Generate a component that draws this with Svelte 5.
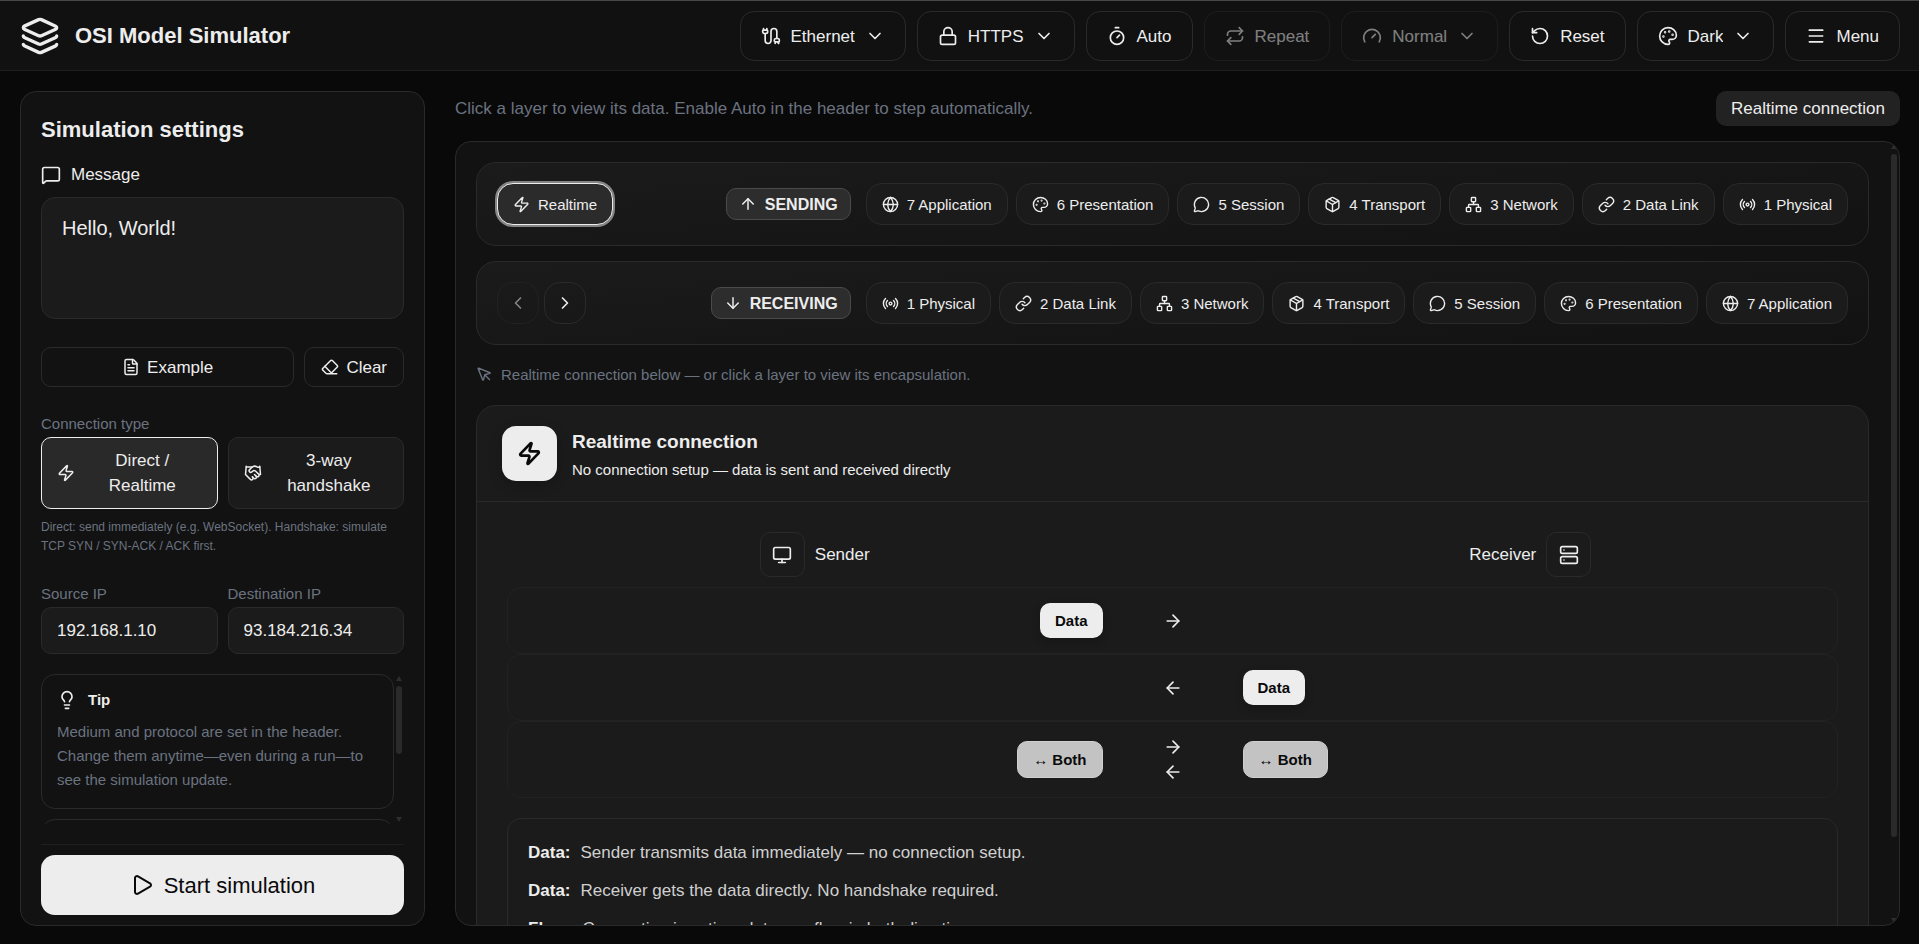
<script>
  const icons = {
    layers: '<path d="M12.83 2.18a2 2 0 0 0-1.66 0L2.6 6.08a1 1 0 0 0 0 1.83l8.58 3.91a2 2 0 0 0 1.66 0l8.58-3.9a1 1 0 0 0 0-1.83z"/><path d="M2 12a1 1 0 0 0 .58.91l8.6 3.91a2 2 0 0 0 1.65 0l8.58-3.9A1 1 0 0 0 22 12"/><path d="M2 17a1 1 0 0 0 .58.91l8.6 3.91a2 2 0 0 0 1.65 0l8.58-3.9A1 1 0 0 0 22 17"/>',
    cable: '<path d="M17 21v-2a1 1 0 0 1-1-1v-1a2 2 0 0 1 2-2h2a2 2 0 0 1 2 2v1a1 1 0 0 1-1 1v2"/><path d="M19 15V6.5a1 1 0 0 0-7 0v11a1 1 0 0 1-7 0V9"/><path d="M21 21v-2h-4"/><path d="M3 5h4V3"/><path d="M7 5a1 1 0 0 1 1 1v1a2 2 0 0 1-2 2H4a2 2 0 0 1-2-2V6a1 1 0 0 1 1-1V3"/>',
    lock: '<rect width="18" height="11" x="3" y="11" rx="2"/><path d="M7 11V7a5 5 0 0 1 10 0v4"/>',
    timer: '<path d="M10 2h4"/><path d="m12 14 3-3"/><circle cx="12" cy="14" r="8"/>',
    repeat: '<path d="m17 2 4 4-4 4"/><path d="M3 11v-1a4 4 0 0 1 4-4h14"/><path d="m7 22-4-4 4-4"/><path d="M21 13v1a4 4 0 0 1-4 4H3"/>',
    gauge: '<path d="m12 14 4-4"/><path d="M3.34 19a10 10 0 1 1 17.32 0"/>',
    reset: '<path d="M3 12a9 9 0 1 0 9-9 9.75 9.75 0 0 0-6.74 2.74L3 8"/><path d="M3 3v5h5"/>',
    palette: '<path d="M12 22a1 1 0 0 1 0-20 10 9 0 0 1 10 9 5 5 0 0 1-5 5h-2.25a1.75 1.75 0 0 0-1.4 2.8l.3.4a1.75 1.75 0 0 1-1.4 2.8z"/><g fill="currentColor"><circle cx="13.5" cy="6.5" r=".5"/><circle cx="17.5" cy="10.5" r=".5"/><circle cx="6.5" cy="12.5" r=".5"/><circle cx="8.5" cy="7.5" r=".5"/></g>',
    menu: '<path d="M4 5h16"/><path d="M4 12h16"/><path d="M4 19h16"/>',
    message: '<path d="M22 17a2 2 0 0 1-2 2H6.828a2 2 0 0 0-1.414.586l-2.202 2.202A.71.71 0 0 1 2 21.286V5a2 2 0 0 1 2-2h16a2 2 0 0 1 2 2z"/>',
    file: '<path d="M6 22a2 2 0 0 1-2-2V4a2 2 0 0 1 2-2h8a2.4 2.4 0 0 1 1.704.706l3.588 3.588A2.4 2.4 0 0 1 20 8v12a2 2 0 0 1-2 2z"/><path d="M14 2v5a1 1 0 0 0 1 1h5"/><path d="M10 9H8"/><path d="M16 13H8"/><path d="M16 17H8"/>',
    eraser: '<path d="M21 21H8a2 2 0 0 1-1.42-.587l-3.994-3.999a2 2 0 0 1 0-2.828l10-10a2 2 0 0 1 2.829 0l5.999 6a2 2 0 0 1 0 2.828L12.834 21"/><path d="m5.082 11.09 8.828 8.828"/>',
    zap: '<path d="M4 14a1 1 0 0 1-.78-1.63l9.9-10.2a.5.5 0 0 1 .86.46l-1.92 6.02A1 1 0 0 0 13 10h7a1 1 0 0 1 .78 1.63l-9.9 10.2a.5.5 0 0 1-.86-.46l1.92-6.02A1 1 0 0 0 11 14z"/>',
    handshake: '<path d="m11 17 2 2a1 1 0 1 0 3-3"/><path d="m14 14 2.5 2.5a1 1 0 1 0 3-3l-3.88-3.88a3 3 0 0 0-4.24 0l-.88.88a1 1 0 1 1-3-3l2.81-2.81a5.79 5.79 0 0 1 7.06-.87l.47.28a2 2 0 0 0 1.42.25L21 4"/><path d="m21 3 1 11h-2"/><path d="M3 3 2 14l6.5 6.5a1 1 0 1 0 3-3"/><path d="M3 4h8"/>',
    bulb: '<path d="M15 14c.2-1 .7-1.7 1.5-2.5 1-.9 1.5-2.2 1.5-3.5A6 6 0 0 0 6 8c0 1 .2 2.2 1.5 3.5.7.7 1.3 1.5 1.5 2.5"/><path d="M9 18h6"/><path d="M10 22h4"/>',
    play: '<path d="M5 5a2 2 0 0 1 3.008-1.728l11.997 6.998a2 2 0 0 1 .003 3.458l-12 7A2 2 0 0 1 5 19z"/>',
    chevronDown: '<path d="m6 9 6 6 6-6"/>',
    chevronLeft: '<path d="m15 18-6-6 6-6"/>',
    chevronRight: '<path d="m9 18 6-6-6-6"/>',
    arrowUp: '<path d="m5 12 7-7 7 7"/><path d="M12 19V5"/>',
    arrowDown: '<path d="M12 5v14"/><path d="m19 12-7 7-7-7"/>',
    arrowRight: '<path d="M5 12h14"/><path d="m12 5 7 7-7 7"/>',
    arrowLeft: '<path d="m12 19-7-7 7-7"/><path d="M19 12H5"/>',
    globe: '<circle cx="12" cy="12" r="10"/><path d="M12 2a14.5 14.5 0 0 0 0 20 14.5 14.5 0 0 0 0-20"/><path d="M2 12h20"/>',
    chat: '<path d="M2.992 16.342a2 2 0 0 1 .094 1.167l-1.065 3.29a1 1 0 0 0 1.236 1.168l3.413-.998a2 2 0 0 1 1.099.092 10 10 0 1 0-4.777-4.719"/>',
    box: '<path d="M11 21.73a2 2 0 0 0 2 0l7-4A2 2 0 0 0 21 16V8a2 2 0 0 0-1-1.73l-7-4a2 2 0 0 0-2 0l-7 4A2 2 0 0 0 3 8v8a2 2 0 0 0 1 1.73z"/><path d="M12 22V12"/><path d="M3.29 7 12 12l8.71-5"/><path d="m7.5 4.27 9 5.15"/>',
    network: '<rect x="16" y="16" width="6" height="6" rx="1"/><rect x="2" y="16" width="6" height="6" rx="1"/><rect x="9" y="2" width="6" height="6" rx="1"/><path d="M5 16v-3a1 1 0 0 1 1-1h12a1 1 0 0 1 1 1v3"/><path d="M12 12V8"/>',
    link: '<path d="M10 13a5 5 0 0 0 7.54.54l3-3a5 5 0 0 0-7.07-7.07l-1.72 1.71"/><path d="M14 11a5 5 0 0 0-7.54-.54l-3 3a5 5 0 0 0 7.07 7.07l1.71-1.71"/>',
    radio: '<path d="M16.247 7.761a6 6 0 0 1 0 8.478"/><path d="M19.075 4.933a10 10 0 0 1 0 14.134"/><path d="M4.925 19.067a10 10 0 0 1 0-14.134"/><path d="M7.753 16.239a6 6 0 0 1 0-8.478"/><circle cx="12" cy="12" r="2"/>',
    pointer: '<path d="M12.586 12.586 19 19"/><path d="M3.688 3.037a.497.497 0 0 0-.651.651l6.5 15.999a.501.501 0 0 0 .947-.062l1.569-6.083a2 2 0 0 1 1.448-1.479l6.124-1.579a.5.5 0 0 0 .063-.947z"/>',
    monitor: '<rect width="20" height="14" x="2" y="3" rx="2"/><path d="M8 21h8"/><path d="M12 17v4"/>',
    server: '<rect width="20" height="8" x="2" y="2" rx="2"/><rect width="20" height="8" x="2" y="14" rx="2"/><path d="M6 6h.01"/><path d="M6 18h.01"/>',
  };

  const layers = [
    { n: 7, name: "Application", icon: "globe" },
    { n: 6, name: "Presentation", icon: "palette" },
    { n: 5, name: "Session", icon: "chat" },
    { n: 4, name: "Transport", icon: "box" },
    { n: 3, name: "Network", icon: "network" },
    { n: 2, name: "Data Link", icon: "link" },
    { n: 1, name: "Physical", icon: "radio" },
  ];
  const receiving = [...layers].reverse();

  const notes = [
    { label: "Data:", text: "Sender transmits data immediately — no connection setup." },
    { label: "Data:", text: "Receiver gets the data directly. No handshake required." },
    { label: "Flow:", text: "Connection is active; data can flow in both directions." },
  ];

  let medium = $state("Ethernet");
  let protocol = $state("HTTPS");
  let speed = $state("Normal");
  let theme = $state("Dark");
  let auto = $state(false);
  let message = $state("Hello, World!");
  let mode = $state("direct");
  let sourceIp = $state("192.168.1.10");
  let destIp = $state("93.184.216.34");
  let selected = $state("realtime");
</script>

{#snippet icon(name, size = 20)}
  <svg width={size} height={size} viewBox="0 0 24 24" fill="none" stroke="currentColor" stroke-width="2" stroke-linecap="round" stroke-linejoin="round" aria-hidden="true">
    {@html icons[name]}
  </svg>
{/snippet}

{#snippet layerButton(layer, side)}
  <button class="layer" class:active={selected === side + layer.n} onclick={() => (selected = side + layer.n)}>
    {@render icon(layer.icon, 17)}
    <span>{layer.n} {layer.name}</span>
  </button>
{/snippet}

{#snippet rail()}
  <div class="rail" aria-hidden="true">
    <i class="up"></i>
    <div class="track"><div class="thumb"></div></div>
    <i class="down"></i>
  </div>
{/snippet}

<div class="page">
  <header>
    <div class="brand">
      {@render icon("layers", 40)}
      <h1>OSI Model Simulator</h1>
    </div>
    <nav>
      <label class="control">
        {@render icon("cable")}
        <select aria-label="Medium" bind:value={medium}>
          <option>Ethernet</option>
          <option>Wi-Fi</option>
        </select>
        {@render icon("chevronDown")}
      </label>
      <label class="control">
        {@render icon("lock")}
        <select aria-label="Protocol" bind:value={protocol}>
          <option>HTTPS</option>
          <option>HTTP</option>
        </select>
        {@render icon("chevronDown")}
      </label>
      <button class="control" onclick={() => (auto = !auto)}>{@render icon("timer")}<span>Auto</span></button>
      <button class="control off" disabled={!auto}>{@render icon("repeat")}<span>Repeat</span></button>
      <label class="control off">
        {@render icon("gauge")}
        <select aria-label="Speed" bind:value={speed} disabled={!auto}>
          <option>Normal</option>
          <option>Fast</option>
        </select>
        {@render icon("chevronDown")}
      </label>
      <button class="control">{@render icon("reset")}<span>Reset</span></button>
      <label class="control">
        {@render icon("palette")}
        <select aria-label="Theme" bind:value={theme}>
          <option>Dark</option>
          <option>Light</option>
        </select>
        {@render icon("chevronDown")}
      </label>
      <button class="control">{@render icon("menu")}<span>Menu</span></button>
    </nav>
  </header>

  <div class="content">
    <aside>
      <h2>Simulation settings</h2>
      <label class="message-label" for="message">{@render icon("message")}<span>Message</span></label>
      <textarea id="message" bind:value={message}></textarea>

      <div class="actions">
        <button class="small grow" onclick={() => (message = "Hello, World!")}>{@render icon("file", 18)}<span>Example</span></button>
        <button class="small" onclick={() => (message = "")}>{@render icon("eraser", 18)}<span>Clear</span></button>
      </div>

      <div class="group">
        <div class="caption" id="conn-type">Connection type</div>
        <div class="pair" role="group" aria-labelledby="conn-type">
          <button class="mode" class:active={mode === "direct"} onclick={() => (mode = "direct")}>
            {@render icon("zap", 18)}<span>Direct / Realtime</span>
          </button>
          <button class="mode" class:active={mode === "handshake"} onclick={() => (mode = "handshake")}>
            {@render icon("handshake", 18)}<span>3-way handshake</span>
          </button>
        </div>
        <p class="hint">Direct: send immediately (e.g. WebSocket). Handshake: simulate TCP SYN / SYN-ACK / ACK first.</p>
      </div>

      <div class="pair addresses">
        <div>
          <label class="caption" for="src">Source IP</label>
          <input id="src" type="text" bind:value={sourceIp} />
        </div>
        <div>
          <label class="caption" for="dst">Destination IP</label>
          <input id="dst" type="text" bind:value={destIp} />
        </div>
      </div>

      <div class="tips">
        <div class="tips-scroll">
          <div class="tip">
            <h3>{@render icon("bulb")}<span>Tip</span></h3>
            <p>Medium and protocol are set in the header. Change them anytime—even during a run—to see the simulation update.</p>
          </div>
          <div class="tip next"></div>
        </div>
        {@render rail()}
      </div>

      <div class="start">
        <button>{@render icon("play", 24)}<span>Start simulation</span></button>
      </div>
    </aside>

    <main>
      <div class="intro">
        <p>Click a layer to view its data. Enable Auto in the header to step automatically.</p>
        <span class="chip">Realtime connection</span>
      </div>

      <div class="panel">
        <div class="panel-scroll">
          <div class="lane">
            <button class="layer" class:active={selected === "realtime"} onclick={() => (selected = "realtime")}>
              {@render icon("zap", 17)}<span>Realtime</span>
            </button>
            <div class="stack">
              <span class="direction">{@render icon("arrowUp", 18)}<b>SENDING</b></span>
              <div class="layers">
                {#each layers as layer}
                  {@render layerButton(layer, "s")}
                {/each}
              </div>
            </div>
          </div>

          <div class="lane">
            <div class="steps">
              <button class="layer step" disabled aria-label="Previous">{@render icon("chevronLeft")}</button>
              <button class="layer step" aria-label="Next">{@render icon("chevronRight")}</button>
            </div>
            <div class="stack">
              <span class="direction">{@render icon("arrowDown", 18)}<b>RECEIVING</b></span>
              <div class="layers">
                {#each receiving as layer}
                  {@render layerButton(layer, "r")}
                {/each}
              </div>
            </div>
          </div>

          <p class="note">{@render icon("pointer", 17)}<span>Realtime connection below — or click a layer to view its encapsulation.</span></p>

          <section class="card">
            <div class="card-head">
              <div class="tile">{@render icon("zap", 25)}</div>
              <div>
                <h2>Realtime connection</h2>
                <p>No connection setup — data is sent and received directly</p>
              </div>
            </div>

            <div class="card-body">
              <div class="hosts">
                <div class="host"><span class="host-icon">{@render icon("monitor")}</span>Sender</div>
                <span></span>
                <div class="host">Receiver<span class="host-icon">{@render icon("server")}</span></div>
              </div>

              <div class="flow">
                <div class="from"><b class="pill">Data</b></div>
                <div class="arrows">{@render icon("arrowRight")}</div>
                <div></div>
              </div>
              <div class="flow">
                <div></div>
                <div class="arrows">{@render icon("arrowLeft")}</div>
                <div class="to"><b class="pill">Data</b></div>
              </div>
              <div class="flow">
                <div class="from"><b class="pill both">↔ Both</b></div>
                <div class="arrows">{@render icon("arrowRight")}{@render icon("arrowLeft")}</div>
                <div class="to"><b class="pill both">↔ Both</b></div>
              </div>

              <div class="notes">
                {#each notes as item}
                  <p><b>{item.label}</b><span>{item.text}</span></p>
                {/each}
              </div>
            </div>
          </section>
        </div>
        {@render rail()}
      </div>
    </main>
  </div>
</div>

<style>
  :global(body) {
    background: #090909;
  }
  .page {
    --text: #ededed;
    --muted: #6b7280;
    --line: #2a2a2a;
    --raised: #1b1b1b;
    --panel: #121212;
    display: flex;
    flex-direction: column;
    height: 100vh;
    background: #090909;
    color: var(--text);
    font-family: "Liberation Sans", Arial, sans-serif;
    font-size: 17px;
    line-height: 25px;
  }
  .page * {
    box-sizing: border-box;
  }
  h1, h2, h3, p {
    margin: 0;
  }
  svg {
    display: block;
    flex: none;
  }
  button, select, input, textarea {
    font: inherit;
    color: inherit;
    margin: 0;
  }
  button {
    display: flex;
    align-items: center;
    justify-content: center;
    cursor: pointer;
    white-space: nowrap;
  }

  header {
    display: flex;
    align-items: center;
    justify-content: space-between;
    flex: none;
    padding: 10px 19px 9px 20px;
    background: #111;
    border-top: 1px solid #474747;
    border-bottom: 1px solid #1f1f1f;
  }
  .brand {
    display: flex;
    align-items: center;
    gap: 15px;
  }
  h1 {
    font-size: 22px;
    line-height: 30px;
  }
  nav {
    display: flex;
    gap: 11px;
  }
  .control {
    display: flex;
    align-items: center;
    gap: 10px;
    height: 50px;
    padding: 0 20px;
    background: transparent;
    border: 1px solid var(--line);
    border-radius: 14px;
  }
  .control.off {
    opacity: 0.5;
  }
  select {
    appearance: none;
    field-sizing: content;
    padding: 0;
    border: 0;
    background: transparent;
    opacity: 1;
  }
  option {
    background: var(--panel);
  }

  .content {
    display: grid;
    grid-template-columns: 405px minmax(0, 1fr);
    gap: 30px;
    flex: 1;
    min-height: 0;
    padding: 20px 19px 18px 20px;
  }

  aside {
    display: flex;
    flex-direction: column;
    min-height: 0;
    padding: 20px 20px 10px;
    background: var(--panel);
    border: 1px solid var(--line);
    border-radius: 16px;
  }
  aside h2 {
    font-size: 22px;
    line-height: 35px;
  }
  .message-label {
    display: flex;
    align-items: center;
    gap: 10px;
    margin: 15px 0 10px;
  }
  textarea {
    display: block;
    flex: none;
    width: 100%;
    height: 122px;
    padding: 15px 20px;
    font-size: 20px;
    line-height: 30px;
    background: var(--raised);
    border: 1px solid var(--line);
    border-radius: 14px;
    outline: none;
    resize: none;
  }
  .actions {
    display: flex;
    gap: 10px;
    margin-top: 28px;
  }
  .small {
    gap: 7px;
    height: 40px;
    padding: 0 16px;
    background: transparent;
    border: 1px solid var(--line);
    border-radius: 10px;
  }
  .grow {
    flex: 1;
  }
  .group {
    margin-top: 24px;
  }
  .caption {
    display: block;
    margin-bottom: 1px;
    font-size: 15px;
    color: var(--muted);
  }
  .pair {
    display: grid;
    grid-template-columns: 1fr 1fr;
    gap: 10px;
  }
  .mode {
    gap: 8px;
    padding: 10px 15px;
    white-space: normal;
    background: var(--raised);
    border: 1px solid var(--line);
    border-radius: 10px;
  }
  .mode span {
    flex: 1;
  }
  .mode.active {
    background: #292929;
    border-color: var(--text);
  }
  .hint {
    margin-top: 9px;
    font-size: 12px;
    line-height: 19px;
    color: var(--muted);
  }
  .addresses {
    margin-top: 25px;
  }
  input {
    display: block;
    width: 100%;
    height: 47px;
    padding: 0 15px;
    background: var(--raised);
    border: 1px solid var(--line);
    border-radius: 10px;
    outline: none;
  }

  .tips {
    position: relative;
    flex: 1;
    min-height: 0;
    margin: 20px 0;
  }
  .tips-scroll, .panel-scroll {
    height: 100%;
    overflow-y: auto;
    scrollbar-width: none;
  }
  .tips-scroll {
    padding-right: 10px;
  }
  .tip {
    padding: 13px 15px 16px;
    border: 1px solid var(--line);
    border-radius: 14px;
    font-size: 15px;
    line-height: 24px;
    color: var(--muted);
  }
  .tip h3 {
    display: flex;
    align-items: center;
    gap: 11px;
    margin-bottom: 8px;
    font-size: 15px;
    color: var(--text);
  }
  .tip.next {
    height: 110px;
    margin-top: 10px;
  }
  .rail {
    position: absolute;
    top: 2px;
    right: 2px;
    bottom: 2px;
    display: flex;
    flex-direction: column;
    align-items: center;
    gap: 5px;
    width: 6px;
  }
  .rail i {
    width: 6px;
    height: 5px;
    background: #2e2e2e;
  }
  .rail .up {
    clip-path: polygon(50% 0, 100% 100%, 0 100%);
  }
  .rail .down {
    clip-path: polygon(0 0, 100% 0, 50% 100%);
  }
  .track {
    flex: 1;
    width: 100%;
  }
  .thumb {
    height: 54%;
    background: #2a2a2a;
    border-radius: 3px;
  }
  .panel .thumb {
    height: 90%;
  }
  .start {
    padding-top: 10px;
    border-top: 1px solid #1f1f1f;
  }
  .start button {
    gap: 10px;
    width: 100%;
    height: 60px;
    font-size: 22px;
    color: #0a0a0a;
    background: var(--text);
    border: 0;
    border-radius: 14px;
  }

  main {
    display: flex;
    flex-direction: column;
    min-width: 0;
    min-height: 0;
  }
  .intro {
    display: flex;
    align-items: center;
    justify-content: space-between;
    margin-bottom: 15px;
    color: var(--muted);
  }
  .chip {
    padding: 5px 15px;
    color: var(--text);
    background: #222;
    border-radius: 10px;
  }
  .panel {
    position: relative;
    flex: 1;
    min-height: 0;
    overflow: hidden;
    background: var(--panel);
    border: 1px solid var(--line);
    border-radius: 16px;
  }
  .panel-scroll {
    padding: 20px 30px 20px 20px;
  }
  .lane {
    display: flex;
    align-items: center;
    justify-content: space-between;
    margin-bottom: 15px;
    padding: 20px;
    background: linear-gradient(175deg, #1b1b1b, #121212);
    border: 1px solid var(--line);
    border-radius: 20px;
  }
  .stack {
    display: flex;
    align-items: center;
    gap: 15px;
  }
  .layers {
    display: flex;
    gap: 8px;
  }
  .layer {
    gap: 8px;
    height: 42px;
    padding: 0 15px;
    font-size: 15px;
    background: var(--raised);
    border: 1px solid var(--line);
    border-radius: 16px;
  }
  .layer.active {
    background: #2b2b2b;
    border-color: var(--text);
    box-shadow: 0 0 0 2px #858585;
  }
  .steps {
    display: flex;
    gap: 5px;
  }
  .step {
    width: 42px;
    padding: 0;
    background: transparent;
  }
  .step:disabled {
    opacity: 0.5;
  }
  .direction {
    display: flex;
    align-items: center;
    gap: 8px;
    height: 32px;
    padding: 0 12px;
    font-size: 16px;
    background: #2d2d2d;
    border: 1px solid #4a4a4a;
    border-radius: 10px;
  }
  .note {
    display: flex;
    align-items: center;
    gap: 8px;
    margin: 17px 0 18px;
    font-size: 15px;
    color: var(--muted);
  }

  .card {
    background: var(--raised);
    border: 1px solid var(--line);
    border-radius: 20px;
  }
  .card-head {
    display: flex;
    align-items: center;
    gap: 15px;
    padding: 20px 25px;
    border-bottom: 1px solid var(--line);
  }
  .card-head h2 {
    font-size: 19px;
    line-height: 32px;
  }
  .card-head p {
    font-size: 15px;
    line-height: 23px;
  }
  .tile {
    display: grid;
    place-items: center;
    width: 55px;
    height: 55px;
    color: #0a0a0a;
    background: var(--text);
    border-radius: 14px;
    box-shadow: 0 4px 14px rgba(0, 0, 0, 0.2);
  }
  .tile svg {
    stroke-width: 2.5;
  }
  .card-body {
    padding: 30px;
  }
  .hosts {
    display: grid;
    grid-template-columns: 1fr 60px 1fr;
    gap: 20px;
    margin-bottom: 10px;
  }
  .host {
    display: flex;
    align-items: center;
    justify-content: center;
    gap: 10px;
  }
  .host-icon {
    display: grid;
    place-items: center;
    width: 45px;
    height: 45px;
    border: 1px solid var(--line);
    border-radius: 10px;
  }
  .flow {
    display: grid;
    grid-template-columns: 1fr 100px 1fr;
    align-items: center;
    gap: 20px;
    padding: 15px 20px;
    border: 1px solid #222;
    border-radius: 14px;
  }
  .from {
    display: flex;
    justify-content: flex-end;
  }
  .to {
    display: flex;
  }
  .arrows {
    display: flex;
    flex-direction: column;
    align-items: center;
    gap: 5px;
  }
  .pill {
    padding: 5px 15px;
    font-size: 15px;
    color: #0a0a0a;
    background: var(--text);
    border-radius: 10px;
    box-shadow: 0 4px 10px rgba(0, 0, 0, 0.2);
  }
  .pill.both {
    background: #c3c3c3;
    border: 1px solid #cfcfcf;
    box-shadow: none;
  }
  .notes {
    margin-top: 20px;
    padding: 15px 20px;
    border: 1px solid var(--line);
    border-radius: 14px;
  }
  .notes p {
    display: flex;
    gap: 10px;
    line-height: 38px;
  }
  .notes span {
    color: #d0d0d0;
  }
</style>
